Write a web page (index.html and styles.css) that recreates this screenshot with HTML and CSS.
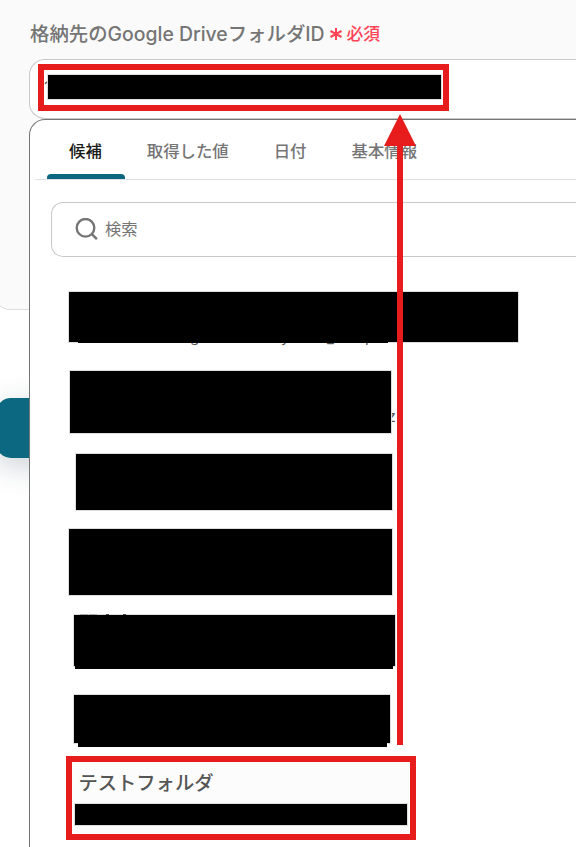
FILE: index.html
```html
<!DOCTYPE html>
<html lang="ja">
<head>
    <meta charset="UTF-8">
    <meta name="viewport" content="width=device-width, initial-scale=1.0">
    <title>格納先のGoogle DriveフォルダID</title>
    <link rel="stylesheet" href="styles.css">
</head>
<body>

<div class="form-card">
    <div class="field-label">
        <span class="label-text">格納先のGoogle DriveフォルダID</span>
        <svg class="required-icon" width="14" height="14" viewBox="0 0 14 14">
            <path d="M7 1v12M1.5 4l11 6M12.5 4l-11 6" stroke="#ff4356" stroke-width="2" fill="none"/>
        </svg>
        <span class="required-text">必須</span>
    </div>
    <div class="field-input">
        <span class="peek peek-start">1</span>
        <span class="peek peek-end">0</span>
        <div class="mask mask-input"></div>
    </div>
</div>
<div class="submit-button"></div>

<div class="dropdown">
    <div class="tabs">
        <div class="tab active">候補</div>
        <div class="tab">取得した値</div>
        <div class="tab">日付</div>
        <div class="tab">基本情報</div>
    </div>
    <div class="search-box">
        <svg width="24" height="24" viewBox="0 0 24 24" fill="none" stroke="#757575" stroke-width="2.4">
            <circle cx="10.5" cy="9.8" r="8.8"/>
            <path d="M16.3 15.6l5.6 5.6"/>
        </svg>
        <span class="search-text">検索</span>
    </div>
    <div class="options">
        <div class="option option-1">
            <span class="peek peek-g">g</span>
            <span class="peek peek-y">y</span>
            <span class="peek peek-line">_</span>
            <span class="peek peek-p">p</span>
            <div class="mask"></div>
            <div class="mask-foot"></div>
        </div>
        <div class="option option-2">
            <span class="peek peek-z">z</span>
            <div class="mask"></div>
        </div>
        <div class="option option-3"><div class="mask"></div></div>
        <div class="option option-4"><div class="mask"></div></div>
        <div class="option option-5">
            <svg class="peek-strokes" width="50" height="1" viewBox="0 0 50 1">
                <path d="M0 .5h8M9 .5h8" stroke="#aaa"/>
                <path d="M26 .5h3M43 .5h3" stroke="#444"/>
            </svg>
            <div class="mask"></div>
            <div class="mask-foot"></div>
        </div>
        <div class="option option-6">
            <div class="mask"></div>
            <div class="mask-foot"></div>
        </div>
        <div class="option option-7">
            <div class="option-name">テストフォルダ</div>
            <div class="mask"></div>
        </div>
    </div>
</div>

<!-- Annotations -->
<div class="highlight highlight-input"></div>
<div class="highlight highlight-option"></div>
<svg class="arrow" width="32" height="632" viewBox="0 0 32 632">
    <path d="M16 0L32 32H19V631H13V32H0z" fill="#e71c1c"/>
</svg>

</body>
</html>
```
FILE: styles.css
```css
* {
    box-sizing: border-box;
}

body {
    position: relative;
    height: 847px;
    margin: 0;
    overflow: hidden;
    background-color: #fff;
    color: #757575;
    font-family: Inter, "Noto Sans CJK JP", sans-serif;
}

.form-card {
    height: 310px;
    margin-left: -6px;
    padding: 17px 0 0 34px;
    background-color: #fafafa;
    border: 1px solid #ddd;
    border-top: none;
    border-right: none;
    border-radius: 0 0 0 16px;
}

.field-label {
    display: flex;
    align-items: center;
    height: 30px;
    padding-left: 1px;
    white-space: nowrap;
}

.label-text {
    font-size: 19.4px;
    font-weight: 500;
}

.required-icon {
    margin: 3px 4px 0 4px;
}

.required-text {
    margin-top: 1px;
    color: #ff4356;
    font-size: 16.8px;
    font-weight: 500;
}

.field-input {
    position: relative;
    height: 60px;
    margin-top: 12px;
    padding: 15px 0 0 18px;
    background-color: #fff;
    border: 1px solid #c8c8cb;
    border-right: none;
    border-radius: 16px 0 0 16px;
}

.mask, .mask-foot {
    position: relative;
    background-color: #000;
}

.mask {
    box-shadow: 0 0 0 1px #ddd;
}

.mask-input {
    width: 393px;
    height: 24px;
}

.peek {
    position: absolute;
    font-size: 16px;
    line-height: 20px;
    color: #555;
}

.peek-start {
    left: 14px;
    top: 17px;
}

.peek-end {
    left: 402px;
    top: 18px;
}

.submit-button {
    width: 100px;
    height: 60px;
    margin: 88px 0 0 -4px;
    background-color: #0b6880;
    border-radius: 15px;
    box-shadow: 0 8px 30px rgba(20, 50, 70, 0.22);
}

.dropdown {
    position: absolute;
    left: 29px;
    right: 0;
    top: 119px;
    height: 728px;
    background-color: #fff;
    border: 1px solid #757575;
    border-right: none;
    border-bottom: none;
    border-radius: 16px 0 0 0;
}

.tabs {
    display: flex;
    height: 60px;
    margin-left: 5px;
    padding-left: 12px;
    border-bottom: 1px solid #e1e1e1;
}

.tab {
    height: 59px;
    padding: 0 23px 0 22px;
    font-size: 16.4px;
    font-weight: 500;
    line-height: 62px;
    white-space: nowrap;
}

.tab.active {
    position: relative;
    color: #1a1a1a;
}

.tab.active::after {
    content: "";
    position: absolute;
    left: 0;
    right: 0;
    bottom: 0;
    height: 5px;
    background-color: #0b6880;
    border-radius: 4px 4px 0 0;
}

.search-box {
    display: flex;
    align-items: center;
    gap: 6px;
    height: 55px;
    margin: 22px 0 0 21px;
    padding-left: 23px;
    border: 1px solid #c8c8c8;
    border-right: none;
    border-radius: 12px 0 0 12px;
    font-size: 16.3px;
}

.search-text {
    margin-top: -3px;
}

.options {
    padding: 35px 0 0 39px;
}

.option {
    position: relative;
}

.option-1 {
    width: 449px;
    height: 79px;
}

.option-1 .mask {
    height: 50px;
}

.option-1 .mask-foot {
    width: 310px;
    height: 1px;
    margin-left: 9px;
}

.peek-g, .peek-y, .peek-line, .peek-p {
    top: 35px;
    font-size: 15px;
}

.peek-g {
    left: 121px;
}

.peek-y {
    left: 212px;
}

.peek-line {
    left: 258px;
    top: 36px;
}

.peek-p {
    left: 296px;
}

.option-2 {
    width: 321px;
    height: 83px;
    margin-left: 1px;
}

.option-2 .mask {
    height: 62px;
}

.peek-z {
    left: 317px;
    top: 35px;
}

.option-3 {
    width: 316px;
    height: 75px;
    margin-left: 7px;
}

.option-3 .mask {
    height: 56px;
}

.option-4 {
    width: 323px;
    height: 86px;
}

.option-4 .mask {
    height: 66px;
}

.option-5 {
    width: 321px;
    height: 80px;
    margin-left: 5px;
}

.option-5 .mask {
    height: 51px;
}

.option-5 .mask-foot {
    width: 318px;
    height: 3px;
    margin-left: 1px;
}

.peek-strokes {
    position: absolute;
    left: 6px;
    top: -1px;
    z-index: 1;
}

.option-6 {
    width: 316px;
    height: 66px;
    margin-left: 5px;
}

.option-6 .mask {
    height: 48px;
}

.option-6 .mask-foot {
    width: 309px;
    height: 4px;
    margin-left: 4px;
}

.option-7 {
    width: 340px;
    height: 76px;
    margin-left: 2px;
    padding: 6px 4px 0;
    background-color: #fcfcfc;
}

.option-name {
    height: 37px;
    padding-left: 3.5px;
    color: #555;
    font-size: 19.3px;
    font-weight: 500;
    line-height: 32px;
    white-space: nowrap;
}

.option-7 .mask {
    width: 332px;
    height: 21px;
}

.highlight {
    position: absolute;
    border: 6px solid #e71c1c;
}

.highlight-input {
    left: 38px;
    top: 64px;
    width: 411px;
    height: 47px;
}

.highlight-option {
    left: 66px;
    top: 756px;
    width: 350px;
    height: 84px;
}

.arrow {
    position: absolute;
    left: 384px;
    top: 114px;
}
```
